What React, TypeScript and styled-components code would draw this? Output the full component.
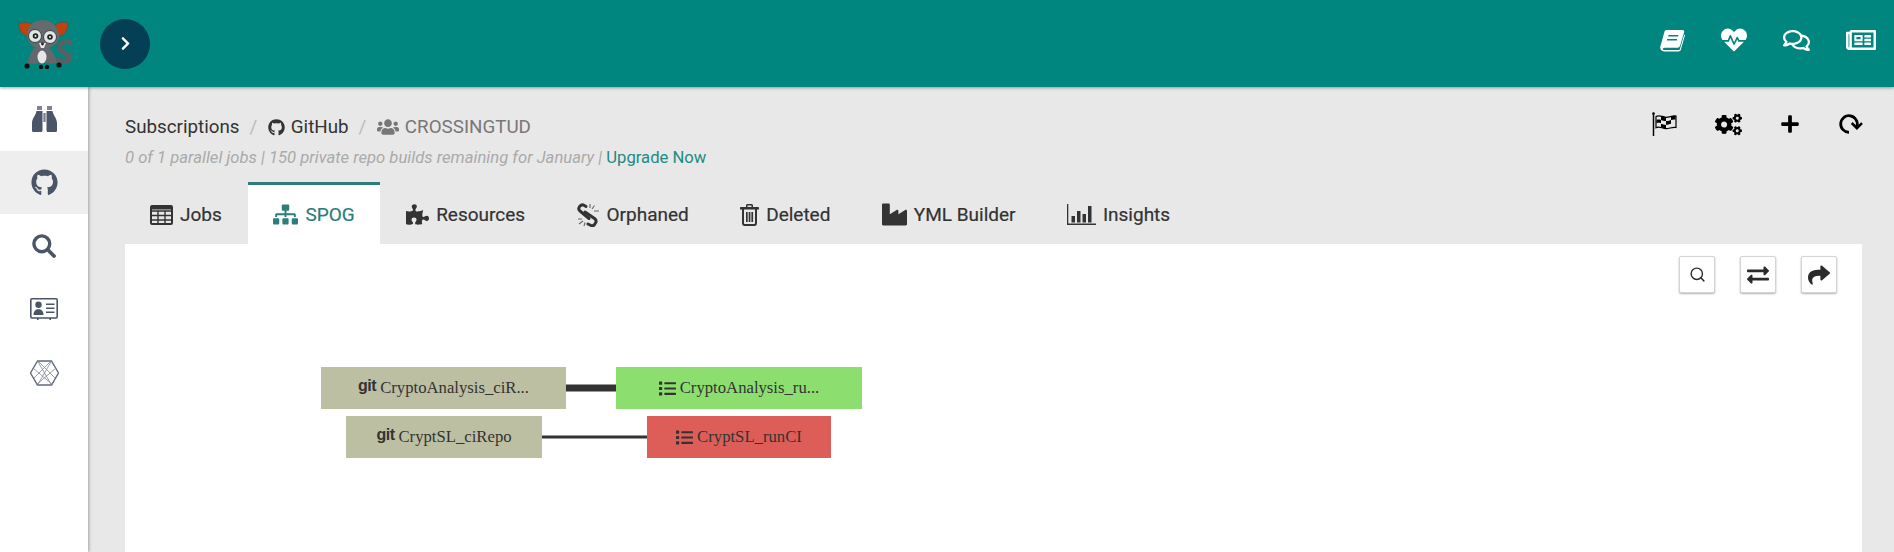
import React from "react";
import styled, { createGlobalStyle } from "styled-components";
import {
  FaGithub, FaHeartbeat, FaRegComments, FaRegNewspaper,
  FaUsers, FaCogs, FaPlus, FaRedo, FaSitemap, FaPuzzlePiece,
  FaIndustry, FaExchangeAlt, FaShare, FaList, FaChevronRight,
} from "react-icons/fa";
import { FiSearch } from "react-icons/fi";

const Global = createGlobalStyle`
  html, body { margin: 0; padding: 0; height: 100%; overflow: hidden; }
  body { font-family: Roboto, "Liberation Sans", sans-serif; background: #e8e8e8; }
  #root { height: 100%; }
`;

const Page = styled.div`
  height: 100vh;
  display: grid;
  grid-template-rows: 87px 1fr;
  grid-template-columns: 88px 1fr;
  overflow: hidden;
`;
const TopBar = styled.header`
  grid-column: 1 / 3;
  background: #00857f;
  display: flex;
  align-items: center;
  padding: 0 18px 0 18px;
  position: relative;
  z-index: 2;
  box-shadow: 0 1px 3px rgba(0, 0, 0, 0.35);
`;
const Logo = styled.svg`
  width: 54px;
  height: 50px;
  flex: none;
`;
const Toggle = styled.button`
  width: 50px;
  height: 50px;
  margin-left: 28px;
  border: 0;
  padding: 0;
  border-radius: 50%;
  background: #043f55;
  color: #fff;
  display: flex;
  align-items: center;
  justify-content: center;
  font-size: 15px;
`;
const TopIcons = styled.nav`
  margin-left: auto;
  margin-bottom: 7px;
  display: flex;
  align-items: center;
  gap: 36px;
  color: #fff;
  line-height: 0;
`;
const Sidebar = styled.aside`
  background: #fff;
  box-shadow: 1px 0 3px rgba(0, 0, 0, 0.3);
  display: flex;
  flex-direction: column;
  position: relative;
  z-index: 1;
`;
const SideItem = styled.div<{ $active?: boolean }>`
  height: 63.5px;
  display: flex;
  align-items: center;
  justify-content: center;
  color: #4a5568;
  background: ${(p) => (p.$active ? "#eeeeee" : "transparent")};
`;
const Main = styled.main`
  padding: 25px 32px 0 37px;
  display: flex;
  flex-direction: column;
  min-height: 0;
`;
const Head = styled.div`
  display: flex;
  justify-content: space-between;
  align-items: flex-start;
  height: 70px;
`;
const Crumbs = styled.div`
  display: flex;
  align-items: center;
  font-size: 18.8px;
  line-height: 28px;
  padding-top: 1px;
  color: #333;
`;
const Sep = styled.span`
  color: #bbb;
  margin: 0 11px 0 10px;
`;
const Crumb = styled.span<{ $muted?: boolean }>`
  display: inline-flex;
  align-items: center;
  gap: 5.5px;
  color: ${(p) => (p.$muted ? "#777" : "#333")};
`;
const Sub = styled.div`
  font-size: 16.65px;
  line-height: 22px;
  margin-top: 6px;
  color: #aaa;
  font-style: italic;
`;
const Upgrade = styled.a`
  color: #1f8a85;
  font-style: normal;
  margin-left: 4px;
`;
const Actions = styled.div`
  display: flex;
  align-items: center;
  padding: 0 1px 0 0;
  color: #000;
  line-height: 0;
  height: 24px;
  gap: 38px;
`;
const RepeatIcon = styled(FaRedo)`
  transform: rotate(45deg);
  margin-left: 1px;
  margin-right: 2px;
`;
const Tabs = styled.div`
  display: flex;
  height: 62px;
`;
const Tab = styled.div<{ $active?: boolean }>`
  display: flex;
  align-items: center;
  gap: 7px;
  padding: 0 25.7px;
  font-size: 19px;
  font-weight: 400;
  -webkit-text-stroke: 0.2px currentColor;
  color: ${(p) => (p.$active ? "#2c7d7b" : "#333")};
  background: ${(p) => (p.$active ? "#fff" : "transparent")};
  border-top: 3px solid ${(p) => (p.$active ? "#2c7d7b" : "transparent")};
  &:first-child { padding-left: 25px; padding-right: 26px; }
`;
const Canvas = styled.section`
  flex: 1;
  background: #fff;
  position: relative;
  overflow: hidden;
`;
const ToolButtons = styled.div`
  position: absolute;
  top: 12px;
  right: 25px;
  display: flex;
  gap: 25px;
`;
const ToolButton = styled.button`
  width: 36px;
  height: 37px;
  padding: 0;
  background: #fff;
  border: 1px solid #d4d4d4;
  border-radius: 2px;
  box-shadow: 0 1px 2px rgba(0, 0, 0, 0.3);
  color: #2b2b2b;
  font-size: 22px;
  display: flex;
  align-items: center;
  justify-content: center;
`;
const Edges = styled.svg`
  position: absolute;
  left: 0;
  top: 0;
  width: 100%;
  height: 100%;
`;
const Node = styled.div<{ $x: number; $y: number; $w: number; $bg: string }>`
  position: absolute;
  left: ${(p) => p.$x}px;
  top: ${(p) => p.$y}px;
  width: ${(p) => p.$w}px;
  height: 42px;
  background: ${(p) => p.$bg};
  display: flex;
  align-items: center;
  justify-content: center;
  gap: 4px;
  font-family: "Liberation Serif", serif;
  font-size: 16.7px;
  color: #333;
  white-space: nowrap;
`;
const GitMark = styled.b`
  font-family: "Liberation Sans", sans-serif;
  font-size: 16px;
  letter-spacing: -0.5px;
  position: relative;
  top: -2px;
`;

const BookIcon = () => (
  <svg width="25" height="23" viewBox="0 0 25 23" fill="currentColor">
    <path d="M6.5 1H22.6c1.2 0 1.900 1 1.500 2.200l-4 13.600c-.4 1.200-1.500 2-2.800 2H4.200c-1 0-1.600.8-1.200 1.600.2.500.7.6 1.200.6h14.600c.5 0 .9-.3 1.100-.8l4.300-14.600.8.7-4.200 14.400c-.3 1-1.100 1.700-2.100 1.700H4c-2 0-3.700-1.600-3.800-3.600-.1-.7.1-1.200.3-1.800L4.400 3c.3-1.100 1-2 2.100-2zM8.500 6.100l-.4 1.400h10l.4-1.400zM7.200 10l-.4 1.400h10l.4-1.400z" />
  </svg>
);
const FlagIcon = () => (
  <svg width="25" height="24" viewBox="0 0 25 24" fill="none" stroke="#000">
    <circle cx="1.500" cy="1.500" r="1.300" fill="#000" stroke="none" />
    <path d="M1.500 2v22" strokeWidth="1.500" />
    <path strokeWidth="1.200" d="M4 4.500c3.500-2 6 .5 10 .8 3.500.2 6-2 10-1.300v11.500c-4-.8-6.500 1.300-10 1.200-4-.2-6.500-3-10-1z" />
    <path fill="#000" stroke="none" d="M9 4.200c1.500.6 3 1 5 1.100v3.800c2 .2 4-.9 5-1.200V4.500c1.500-.6 3-.8 4.500-.7v3.700c-1.500-.2-3 0-4.500.4v3.800c-2 .4-3.500 1.200-5 1.100v3.900c-2-.1-3.500-.9-5-1.600v-3.900c-1.500-.5-3-.6-4.500 0V8c1.500-.6 3-.5 4.500 0zM9 7.900v3.800c1.700.6 3.300 1.100 5 1.200V9.100c-1.700 0-3.300-.6-5-1.200z" />
  </svg>
);
const HexIcon = () => (
  <svg width="29" height="26" viewBox="0 0 29 26" fill="none" stroke="#7d8695" strokeWidth="0.8">
    <path strokeWidth="1.400" stroke="#5f6a7c" d="M7.500 1h14l7 12-7 12h-14l-7-12z" />
    <path d="M7.500 1l14 24M21.500 1l-14 24M3 8l20 17M26 8L6 25M4 18L21 1M25 18L8 1" />
  </svg>
);
const BinocularsIcon = () => (
  <svg width="25" height="26" viewBox="0 0 25 26" fill="currentColor">
    <rect x="5" y="0" width="5" height="4" fill="#7b8494" />
    <rect x="15" y="0" width="5" height="4" fill="#7b8494" />
    <path d="M4.500 5H10.500V24.500c0 .8-.5 1.500-1.300 1.500H1.300C.5 26 0 25.300 0 24.500V17C.2 12 3.500 10 4.500 5z" />
    <path d="M20.500 5H14.500V24.500c0 .8.5 1.500 1.300 1.500h7.900c.8 0 1.300-.7 1.300-1.500V17c-.2-5-3.500-7-4.500-12z" />
    <rect x="11.300" y="7" width="2.400" height="9" fill="#7b8494" />
  </svg>
);
const MagnifierIcon = () => (
  <svg width="24" height="24" viewBox="0 0 24 24" fill="none" stroke="currentColor">
    <circle cx="9.800" cy="9.800" r="7.900" strokeWidth="3.400" />
    <path d="M15.500 15.500l6.500 6.500" strokeWidth="3.800" strokeLinecap="round" />
  </svg>
);
const CardIcon = () => (
  <svg width="28" height="22" viewBox="0 0 28 22" fill="currentColor">
    <rect x="0.800" y="0.800" width="26.400" height="19.200" rx="1.200" fill="none" stroke="currentColor" strokeWidth="1.600" />
    <circle cx="8.500" cy="6.800" r="3.200" />
    <path d="M3.500 17c0-4 2-5.800 5-5.800s5 1.800 5 5.800z" />
    <path d="M16 5.500h8.500v1.500H16zM16 9.500h8.500V11H16zM16 13.500h8.500V15H16z" />
    <rect x="7" y="20" width="1.600" height="2" />
    <rect x="19.400" y="20" width="1.600" height="2" />
  </svg>
);
const TableIcon = () => (
  <svg width="23" height="20" viewBox="0 0 23 20" fill="none" stroke="currentColor">
    <rect x="1" y="1" width="21" height="18" rx="1" strokeWidth="2" />
    <path strokeWidth="1.400" d="M1 6h21M1 10.500h21M1 15h21M8 6v13M15 6v13" />
    <path strokeWidth="3" d="M1 3h21" />
  </svg>
);
const ChainIcon = () => (
  <svg width="23" height="24" viewBox="0 0 23 24" fill="none" stroke="currentColor">
    <path strokeWidth="3" strokeLinecap="round" d="M9 3.500L7 2.300C5.500 1.500 4 2 3 3L2.200 4.200C1.500 5.500 1.800 7 3 8L12 15.500" />
    <path strokeWidth="3" strokeLinecap="round" d="M8 9l9.500 6.500c1.500 1.200 2 3 1 4.500l-1 1.500c-1 1.300-2.700 1.500-4 .7L11 21" />
    <path strokeWidth="1.100" stroke="#666" d="M13 1v4M17.500 2.500l-2.500 3.500M22 8h-5M1 16h4M2 21l4-3M7 23l1-3.500" />
  </svg>
);
const TrashIcon = () => (
  <svg width="19" height="22" viewBox="0 0 19 22" fill="currentColor">
    <path d="M6 3V1.500C6 .7 6.700 0 7.500 0h4c.8 0 1.500.7 1.500 1.500V3h5c.6 0 1 .4 1 1v1.500H17V19c0 1.700-1 3-2.500 3h-10C3 22 2 20.700 2 19V5.500H0V4c0-.6.4-1 1-1zM7.500 3h4V1.500h-4zM4 5.500V19c0 .6.300 1 .5 1h10c.2 0 .5-.4.5-1V5.500z" />
    <path d="M6 8h1.700v10H6zM8.700 8h1.700v10H8.700zM11.400 8h1.700v10h-1.700z" />
  </svg>
);
const InsightsIcon = () => (
  <svg width="29" height="21" viewBox="0 0 29 21" fill="currentColor">
    <path d="M0 0h1.300v19.500H29V21H0z" />
    <rect x="4.500" y="12" width="3.500" height="6.500" />
    <rect x="10" y="7" width="3.500" height="11.500" />
    <rect x="15.500" y="10" width="3.500" height="8.500" />
    <rect x="21" y="2" width="3.500" height="16.500" />
  </svg>
);
const Lemur = () => (
  <Logo viewBox="0 0 54 50">
    <path d="M53 24c-2-2-7-2-10 1-3 3-2 6 2 8 4 2 8 4 6 7-2 3-7 3-11 1" fill="none" stroke="#5b5f63" strokeWidth="5" strokeLinecap="round" />
    <path d="M1 4.500c4-1.500 10-1.500 14 1.500l-3 11c-3 .5-7-1-9.500-5C1 9.500 .8 7 1 4.500z" fill="#c2420e" stroke="#555" strokeWidth="1" />
    <path d="M50 4c-4-1.500-9-1-13 2l3 11c3 .5 6-1 8-5 1.500-2.500 2-5 2-8z" fill="#c2420e" stroke="#555" strokeWidth="1" />
    <path d="M24 1c-8 .5-15 5-15 15 0 8 7 14 15.500 14S42 24 41 16C40 6 32 .500 24 1z" fill="#666a6e" />
    <circle cx="17" cy="17" r="6.500" fill="#dfe6e6" stroke="#3f4447" strokeWidth="1" />
    <circle cx="32" cy="18" r="6.500" fill="#dfe6e6" stroke="#3f4447" strokeWidth="1" />
    <circle cx="17.500" cy="17" r="2.800" fill="#222" />
    <circle cx="32" cy="18" r="2.800" fill="#222" />
    <circle cx="17.500" cy="17" r="1" fill="#dff" />
    <circle cx="32" cy="18" r="1" fill="#dff" />
    <path d="M21 24h7l-2 5h-3z" fill="#e8e8e8" />
    <circle cx="24.500" cy="25" r="1.400" fill="#222" />
    <path d="M16 29c-3 4-5 9-7 15l7 1 8-2 9 2 6-1c-1-6-4-11-7-15z" fill="#64686c" />
    <ellipse cx="24" cy="38" rx="4.500" ry="6.500" fill="#e6e6e6" />
    <g fill="#111">
      <circle cx="9" cy="47" r="2.600" />
      <circle cx="23" cy="48" r="2.200" />
      <circle cx="29" cy="48" r="2.200" />
      <circle cx="41" cy="46" r="2.600" />
    </g>
  </Logo>
);

const tabs = [
  { label: "Jobs", icon: <TableIcon /> },
  { label: "SPOG", icon: <FaSitemap size={25} />, active: true },
  { label: "Resources", icon: <FaPuzzlePiece size={23} /> },
  { label: "Orphaned", icon: <ChainIcon /> },
  { label: "Deleted", icon: <TrashIcon /> },
  { label: "YML Builder", icon: <FaIndustry size={25} /> },
  { label: "Insights", icon: <InsightsIcon /> },
];

const nodes = [
  { x: 196, y: 123, w: 245, bg: "#bdbfa3", git: true, text: "CryptoAnalysis_ciR..." },
  { x: 491, y: 123, w: 246, bg: "#8cdf6f", text: "CryptoAnalysis_ru..." },
  { x: 221, y: 172, w: 196, bg: "#bdbfa3", git: true, text: "CryptSL_ciRepo" },
  { x: 522, y: 172, w: 184, bg: "#dd5e58", text: "CryptSL_runCI" },
];

export default function App() {
  return (
    <Page>
      <Global />
      <TopBar>
        <Lemur />
        <Toggle aria-label="Expand"><FaChevronRight /></Toggle>
        <TopIcons>
          <BookIcon />
          <FaHeartbeat size={26} />
          <FaRegComments size={27} />
          <FaRegNewspaper size={30} />
        </TopIcons>
      </TopBar>
      <Sidebar>
        <SideItem><BinocularsIcon /></SideItem>
        <SideItem $active><FaGithub size={27} /></SideItem>
        <SideItem><MagnifierIcon /></SideItem>
        <SideItem><CardIcon /></SideItem>
        <SideItem><HexIcon /></SideItem>
      </Sidebar>
      <Main>
        <Head>
          <div>
            <Crumbs>
              <Crumb>Subscriptions</Crumb>
              <Sep>/</Sep>
              <Crumb><FaGithub size={17} />GitHub</Crumb>
              <Sep>/</Sep>
              <Crumb $muted><FaUsers size={22} />CROSSINGTUD</Crumb>
            </Crumbs>
            <Sub>
              0 of 1 parallel jobs | 150 private repo builds remaining for January |<Upgrade>Upgrade Now</Upgrade>
            </Sub>
          </div>
          <Actions>
            <FlagIcon />
            <FaCogs size={27} />
            <FaPlus size={20} />
            <RepeatIcon size={20} />
          </Actions>
        </Head>
        <Tabs>
          {tabs.map((t) => (
            <Tab key={t.label} $active={t.active}>{t.icon}{t.label}</Tab>
          ))}
        </Tabs>
        <Canvas>
          <Edges>
            <line x1="441" y1="144" x2="491" y2="144" stroke="#333" strokeWidth="7" />
            <line x1="417" y1="193" x2="522" y2="193" stroke="#333" strokeWidth="3" />
          </Edges>
          {nodes.map((n) => (
            <Node key={n.text} $x={n.x} $y={n.y} $w={n.w} $bg={n.bg}>
              {n.git ? <GitMark>git</GitMark> : <FaList size={17} />}
              {n.text}
            </Node>
          ))}
          <ToolButtons>
            <ToolButton><FiSearch size={17} /></ToolButton>
            <ToolButton><FaExchangeAlt /></ToolButton>
            <ToolButton><FaShare /></ToolButton>
          </ToolButtons>
        </Canvas>
      </Main>
    </Page>
  );
}
